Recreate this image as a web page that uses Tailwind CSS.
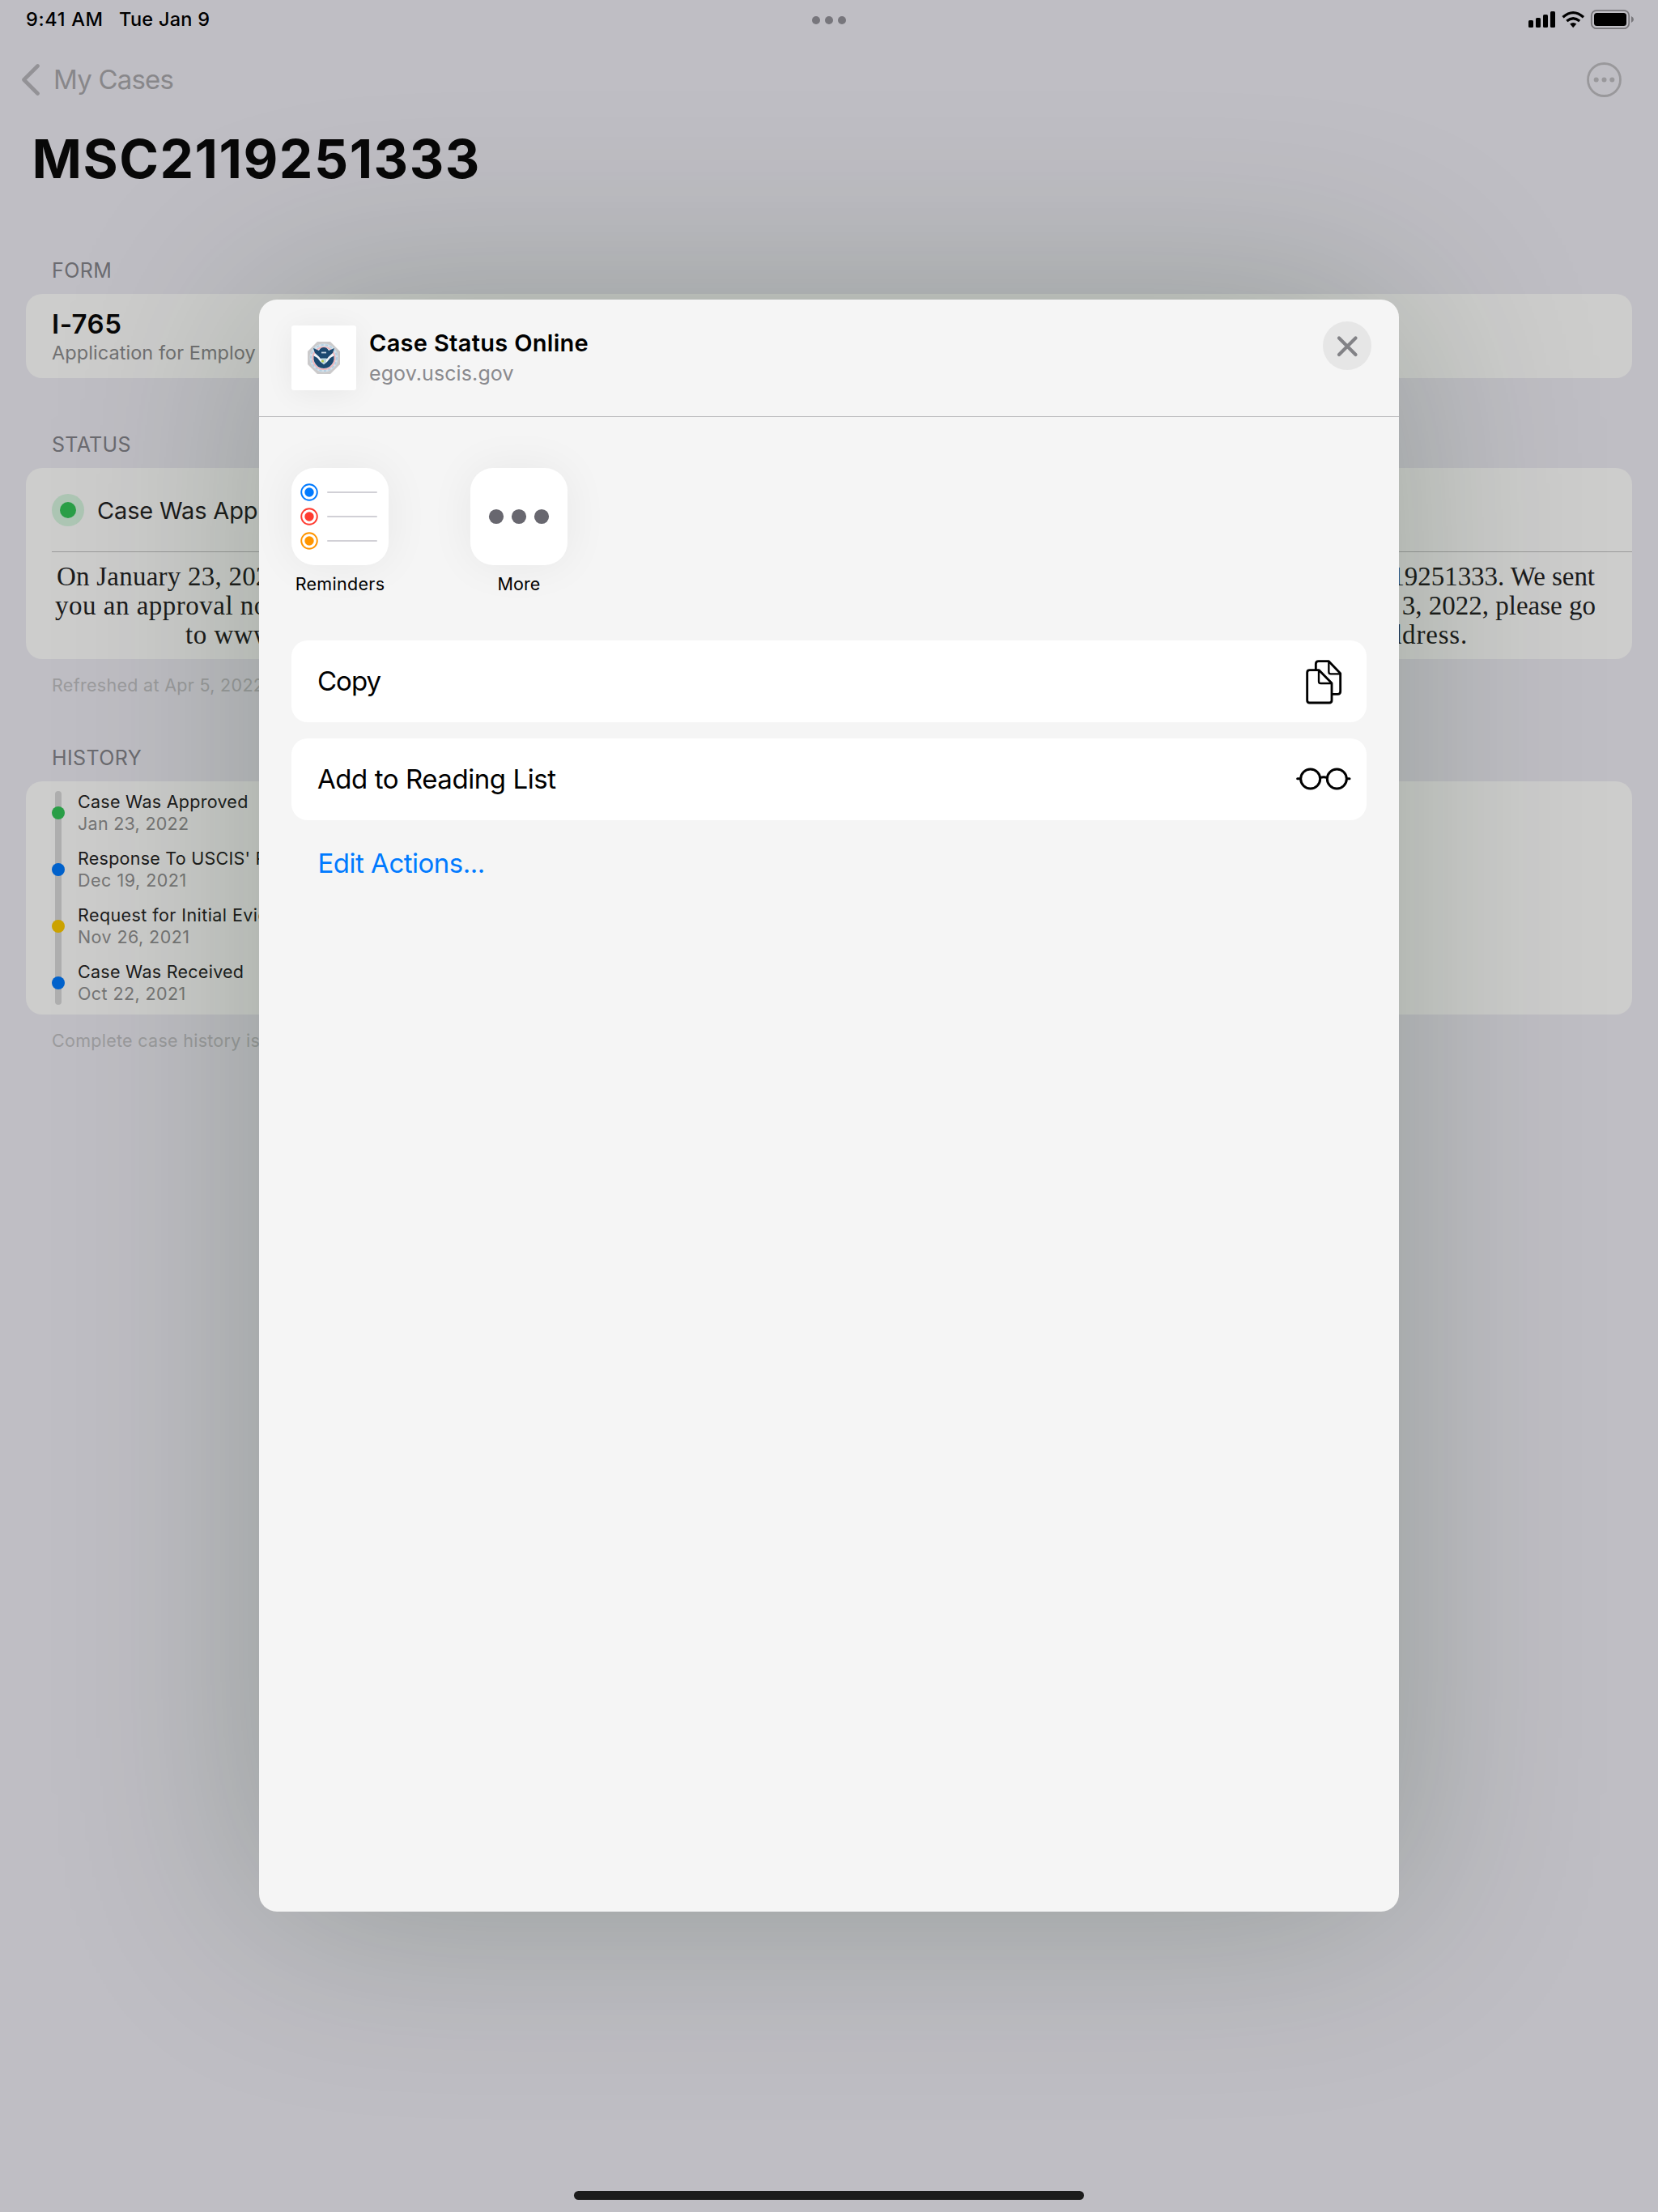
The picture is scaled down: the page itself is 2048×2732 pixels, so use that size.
<!DOCTYPE html>
<html lang="en">
<head>
<meta charset="utf-8">
<title>MSC2119251333</title>
<script src="https://cdn.jsdelivr.net/npm/@tailwindcss/browser@4"></script>
</head>
<body class="relative h-[2732px] w-[2048px] overflow-hidden bg-[#bfbec4] font-['Inter',sans-serif] whitespace-nowrap text-black">

<!-- Status bar -->
<header class="relative flex h-[47px] items-center justify-between pl-8 pr-[30px] text-[23.5px] font-medium">
  <div class="flex">
    <span class="w-[115px] tracking-[0.7px]">9:41 AM</span>
    <span class="tracking-[0.27px]">Tue Jan 9</span>
  </div>
  <div class="absolute left-[1003px] top-5 flex gap-1.5">
    <i class="size-2.5 rounded-full bg-[#77767c]"></i><i class="size-2.5 rounded-full bg-[#77767c]"></i><i class="size-2.5 rounded-full bg-[#77767c]"></i>
  </div>
  <svg class="h-[26px] w-[130px]" viewBox="0 0 130 26">
    <rect x="0" y="14" width="6" height="9" rx="1.5"/><rect x="9" y="11" width="6" height="12" rx="1.5"/><rect x="18" y="7" width="6" height="16" rx="1.5"/><rect x="27" y="3" width="6" height="20" rx="1.5"/>
    <g fill="none" stroke="#000" stroke-width="3.3">
      <path d="M42.5 10.3 Q55.2 -1 68 10.3"/><path d="M47.3 15 Q55.2 8.5 63.2 15"/>
    </g>
    <path d="M51.2 18.6 Q55.2 15.6 59.3 18.6 L55.2 23.2Z"/>
    <rect x="77.8" y="1.8" width="46.4" height="22.4" rx="6.5" fill="none" stroke="#77767a" stroke-width="1.8"/>
    <rect x="81" y="5" width="40" height="16" rx="3.5"/>
    <path d="M127 9 Q130 10.4 130 13 Q130 15.6 127 17Z" fill="#77767a"/>
  </svg>
</header>

<!-- Navigation bar -->
<nav class="flex h-[101px] items-center justify-between pl-[26px] pr-[45px]">
  <div class="flex items-center text-[33px] tracking-[-0.8px] text-[#88878a]">
    <svg class="h-10 w-6" viewBox="0 0 24 40" fill="none" stroke="#939296" stroke-width="4.6" stroke-linecap="round" stroke-linejoin="round"><path d="M20.5 3.5 L3.5 20.5 L20.5 37.5"/></svg>
    <span class="ml-[16px] pt-[2px]">My Cases</span>
  </div>
  <svg class="mt-[2px] size-[43px]" viewBox="0 0 43 43"><circle cx="21.5" cy="21.5" r="20" fill="none" stroke="#99989b" stroke-width="2.8"/><g fill="#99989b"><circle cx="11.7" cy="21.5" r="3"/><circle cx="21.5" cy="21.5" r="3"/><circle cx="31.3" cy="21.5" r="3"/></g></svg>
</nav>
<h1 class="flex h-[95px] items-center pt-[2px] pl-[39.5px] text-[66px] font-bold tracking-[1.5px] text-[#080808]">MSC2119251333</h1>

<main class="px-8">
  <!-- Form -->
  <h2 class="mt-[70px] mb-[9px] flex h-[41px] items-center pt-[2px] pl-8 text-[25px] tracking-[0.4px] text-[#6b6b70]">FORM</h2>
  <section class="h-[104px] rounded-[20px] bg-[#cdcdcc] px-8 pt-[17px]">
    <p class="flex h-10 items-center pt-[2px] text-[33px] font-semibold tracking-[0.5px] text-[#080808]">I-765</p>
    <p class="flex h-[31px] w-[253px] items-center overflow-hidden text-[23.5px] tracking-[0.06px] text-[#717172]">Application for Employment Authorization</p>
  </section>

  <!-- Status -->
  <h2 class="mt-[61px] mb-[9px] flex h-[41px] items-center pt-[2px] pl-8 text-[25px] tracking-[0.3px] text-[#6b6b70]">STATUS</h2>
  <section class="h-[236px] rounded-[20px] bg-[#cdcdcc] pl-8">
    <div class="flex h-[104px] items-center border-b border-[#9a9a9a] pt-px">
      <i class="flex size-10 items-center justify-center rounded-full bg-[#adc6b4]"><b class="size-5 rounded-full bg-[#2a9f47]"></b></i>
      <span class="ml-4 pt-px text-[29px] tracking-[-0.15px] text-[#1c1c1c]">Case Was Approved</span>
    </div>
    <div class="pt-3 font-['Liberation_Serif',serif] text-[33px] leading-9 text-[#1c1c1c]">
      <p class="flex justify-between pl-[6px] pr-[46px]"><span class="tracking-[0.23px]">On January 23, 2022, we approved your Form I-765,</span><span class="tracking-[-0.05px]">Receipt Number MSC2119251333. We sent</span></p>
      <p class="flex justify-between pl-[4px] pr-[45px]"><span class="tracking-[0.5px]">you an approval notice. If you do not receive it</span><span>by February 3, 2022, please go</span></p>
      <p class="flex justify-between pl-[165px] pr-[203px]"><span class="tracking-[0.5px]">to www.uscis.gov/e-request</span><span class="tracking-[0.8px]">to update your mailing address.</span></p>
    </div>
  </section>
  <p class="mt-[17px] flex h-[30px] items-center pl-8 text-[21.5px] tracking-[0.3px] text-[#9b9b9d]">Refreshed at Apr 5, 2022</p>

  <!-- History -->
  <h2 class="mt-[54px] mb-[9px] flex h-[41px] items-center pt-[2px] pl-8 text-[25px] tracking-[0.4px] text-[#6b6b70]">HISTORY</h2>
  <section class="h-[288px] rounded-[20px] bg-[#cdcdcc] px-8 pt-3">
    <div class="relative flex h-[264px] flex-col gap-4 text-[21.5px] leading-[27px]">
      <i class="absolute left-1 top-0 h-[264px] w-2 rounded-full bg-[#afafaf]"></i>
      <div class="relative flex items-center gap-4"><i class="size-4 rounded-full bg-[#2a9f47]"></i><div class="tracking-[0.27px]"><p class="text-[#1c1c1c]">Case Was Approved</p><p class="text-[#757575]">Jan 23, 2022</p></div></div>
      <div class="relative flex items-center gap-4"><i class="size-4 rounded-full bg-[#0062cc]"></i><div class="tracking-[0.25px]"><p class="text-[#1c1c1c]">Response To USCIS' Request</p><p class="tracking-[0.5px] text-[#757575]">Dec 19, 2021</p></div></div>
      <div class="relative flex items-center gap-4"><i class="size-4 rounded-full bg-[#cca300]"></i><div class="tracking-[0.42px]"><p class="text-[#1c1c1c]">Request for Initial Evidence</p><p class="text-[#757575]">Nov 26, 2021</p></div></div>
      <div class="relative flex items-center gap-4"><i class="size-4 rounded-full bg-[#0062cc]"></i><div class="tracking-[0.27px]"><p class="text-[#1c1c1c]">Case Was Received</p><p class="tracking-[0.4px] text-[#757575]">Oct 22, 2021</p></div></div>
    </div>
  </section>
  <p class="mt-[17px] flex h-[30px] items-center pl-8 text-[21.5px] tracking-[0.28px] text-[#9b9b9d]">Complete case history is</p>
</main>

<!-- Share sheet -->
<div class="absolute left-[320px] top-[370px] h-[1991px] w-[1408px] rounded-[22px] bg-[#f5f5f5] shadow-[0_0_300px_0_rgba(0,38,8,0.23)]">
  <div class="flex h-[145px] items-start border-b border-[#bdbdbf] pl-10 pr-[34px]">
    <div class="mt-8 flex size-20 items-center justify-center rounded-[3px] bg-white shadow-[0_4px_36px_rgba(0,0,0,0.06)]">
      <svg class="size-10" viewBox="0 0 40 40">
        <defs><filter id="soft"><feGaussianBlur stdDeviation="0.7"/></filter></defs>
        <g filter="url(#soft)">
          <path d="M12 0H28L40 12V28L28 40H12L0 28V12Z" fill="#cbcacb"/>
          <circle cx="20" cy="20" r="17.5" fill="#d3e1ea"/>
          <circle cx="20" cy="20" r="16" fill="none" stroke="#b4cfe2" stroke-width="2" stroke-dasharray="3 2.5"/>
          <circle cx="20" cy="20.5" r="13.6" fill="#f4f6f9" stroke="#f0b3b8" stroke-width="1.8"/>
          <path d="M7 8 L14 11 Q16 7 20 7 Q24 7 26 11 L33 8 L31 14 L26 18.500 L24 21 H16 L14 18.500 L9 14Z" fill="#1f4a70"/>
          <path d="M7.500 17.500 L12 20 L16 25 L20 28 L24 25 L28 20 L32.500 17.500 Q33.500 26 27 31 Q20 35 13 31 Q6.500 26 7.500 17.500Z" fill="#1f4a70"/>
          <path d="M17 13.500h6" stroke="#c5d4e2" stroke-width="1.800"/>
          <path d="M16.500 20.500 L23.500 20.500 L22.500 26 L20 28 L17.500 26Z" fill="#b9d5df"/><circle cx="18.500" cy="24" r="1.600" fill="#b5c94e"/>
        </g>
      </svg>
    </div>
    <div class="ml-4 mt-[35px]">
      <p class="flex h-[38px] items-center text-[29px] font-semibold tracking-[0.3px]">Case Status Online</p>
      <p class="flex h-9 items-center text-[25px] leading-7 tracking-[0.1px] text-[#8a8a8e]">egov.uscis.gov</p>
    </div>
    <div class="ml-auto mt-[27px] flex size-[60px] items-center justify-center rounded-full bg-[#e6e6e6]">
      <svg class="size-7" viewBox="0 0 28 28" fill="none" stroke="#828286" stroke-width="4.200" stroke-linecap="round"><path d="M4 4.500 L24.500 25 M24.500 4.500 L4 25"/></svg>
    </div>
  </div>

  <div class="flex gap-[101px] pl-10 pt-[63px] text-[21.500px]">
    <div class="flex w-[120px] flex-col items-center">
      <svg class="size-[120px] rounded-[28px] bg-white shadow-[0_0_56px_rgba(0,0,0,0.06)]" viewBox="0 0 120 120">
        <g fill="none" stroke-width="1.900"><circle cx="22" cy="30" r="9.800" stroke="#007aff"/><circle cx="22" cy="60" r="9.800" stroke="#ff3b30"/><circle cx="22" cy="90" r="9.800" stroke="#ff9500"/></g>
        <circle cx="22" cy="30" r="5.700" fill="#007aff"/><circle cx="22" cy="60" r="5.700" fill="#ff3b30"/><circle cx="22" cy="90" r="5.700" fill="#ff9500"/>
        <path d="M45 30H105M45 60H105M45 90H105" stroke="#d1d0d6" stroke-width="2" stroke-linecap="round"/>
      </svg>
      <span class="mt-2 leading-[30px] tracking-[0.3px]">Reminders</span>
    </div>
    <div class="flex w-[120px] flex-col items-center">
      <svg class="size-[120px] rounded-[28px] bg-white shadow-[0_0_56px_rgba(0,0,0,0.06)]" viewBox="0 0 120 120"><g fill="#68676f"><circle cx="32" cy="60" r="9.100"/><circle cx="60" cy="60" r="9.100"/><circle cx="88" cy="60" r="9.100"/></g></svg>
      <span class="mt-2 leading-[30px] tracking-[0.1px]">More</span>
    </div>
  </div>

  <div class="mt-[55px] flex flex-col gap-5 px-10 text-[33px]">
    <div class="flex h-[101px] items-center justify-between rounded-[20px] bg-white pl-8 pr-[30px]">
      <span class="tracking-[-1px]">Copy</span>
      <svg class="mt-[2px] h-[55px] w-[45px]" viewBox="98 104 135 165" fill="none" stroke="#000" stroke-width="8.500" stroke-linejoin="round">
        <path d="M112 142H147L194 190V254q0 9-9 9H112q-9 0-9-9V151q0-9 9-9Z"/><path d="M146 142V184q0 7 8 7H194" stroke-width="7"/>
        <path d="M135 142V119q0-10 10-10H183L226 154V221q0 10-10 10H196"/><path d="M183 110V148q0 8 8 8H226" stroke-width="7"/>
      </svg>
    </div>
    <div class="flex h-[101px] items-center justify-between rounded-[20px] bg-white pl-8 pr-[19px]">
      <span class="tracking-[-0.440px]">Add to Reading List</span>
      <svg class="-mt-px h-[30px] w-[68px]" viewBox="62 503 204 90" fill="none" stroke="#000" stroke-width="9" stroke-linecap="round"><circle cx="115" cy="548" r="36"/><circle cx="213" cy="548" r="36"/><path d="M152 543Q164 539 176 543M67 547H77M251 547H260"/></svg>
    </div>
  </div>
  <p class="mt-[33px] pl-[72.500px] text-[33px] leading-[41px] tracking-[-0.500px] text-[#007aff]">Edit Actions...</p>
</div>

<!-- Home indicator -->
<div class="absolute bottom-[15px] left-[709px] h-[11px] w-[630px] rounded-full bg-[#1c1c1c]"></div>
</body>
</html>
